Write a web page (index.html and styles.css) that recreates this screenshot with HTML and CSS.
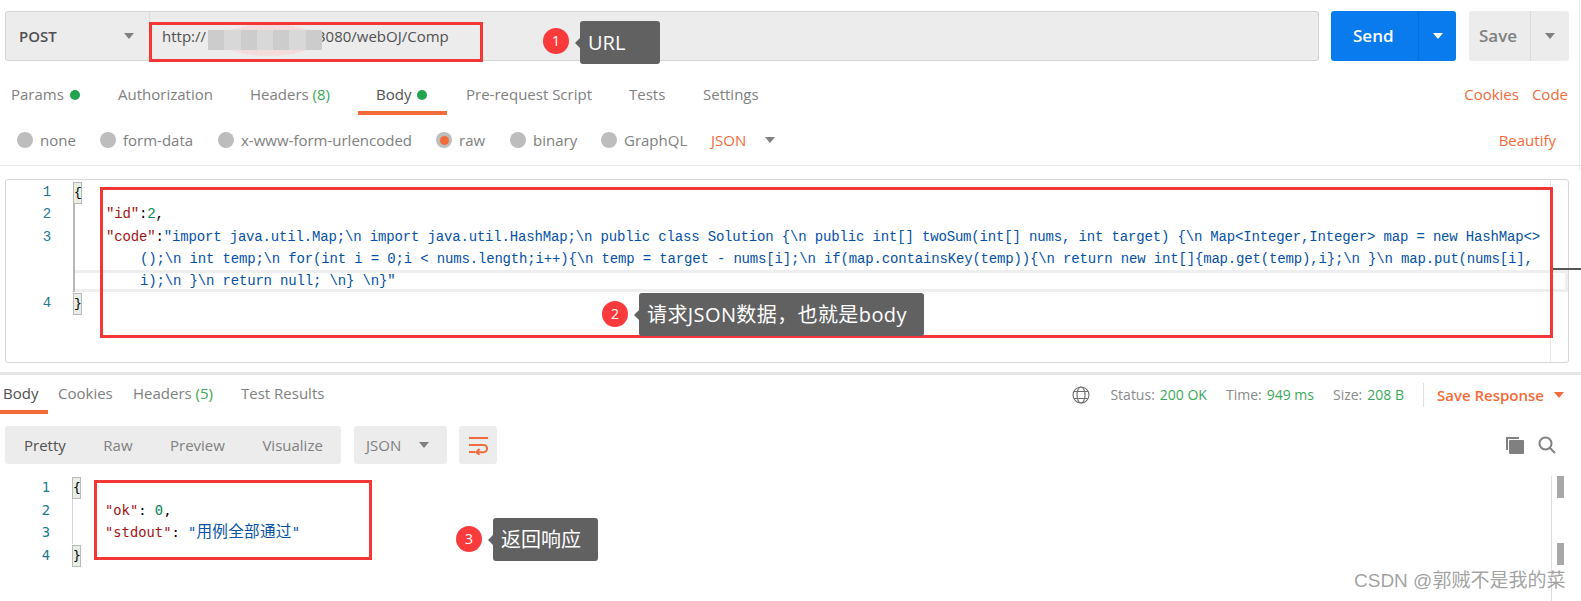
FILE: index.html
```html
<!DOCTYPE html>
<html lang="zh">
<head>
<meta charset="utf-8">
<title>Postman</title>
<link rel="stylesheet" href="styles.css">
</head>
<body>
<div class="app">
  <div class="url-row">
    <div class="url-bar">
      <div class="method"><span>POST</span><i class="caret"></i></div>
      <div class="url">http://<span class="url-gap"></span>3080/webOJ/Comp</div>
    </div>
    <div class="send"><span class="send-label">Send</span><span class="send-more"><i class="caret caret-white"></i></span></div>
    <div class="save"><span class="save-label">Save</span><span class="save-more"><i class="caret"></i></span></div>
  </div>

  <div class="tabs req-tabs">
    <span class="tab t-params">Params<i class="dot"></i></span>
    <span class="tab t-auth">Authorization</span>
    <span class="tab t-headers">Headers <em>(8)</em></span>
    <span class="tab t-body active">Body<i class="dot"></i></span>
    <span class="tab t-pre">Pre-request Script</span>
    <span class="tab t-tests">Tests</span>
    <span class="tab t-settings">Settings</span>
    <span class="tab-right"><span class="link">Cookies</span><span class="link">Code</span></span>
  </div>

  <div class="radios">
    <span class="radio r-none"><i></i>none</span>
    <span class="radio r-form"><i></i>form-data</span>
    <span class="radio r-url"><i></i>x-www-form-urlencoded</span>
    <span class="radio r-raw on"><i></i>raw</span>
    <span class="radio r-bin"><i></i>binary</span>
    <span class="radio r-gql"><i></i>GraphQL</span>
    <span class="link r-json">JSON</span><i class="caret r-caret"></i>
    <span class="link beautify">Beautify</span>
  </div>

  <div class="editor">
    <div class="row"><span class="ln">1</span><span class="code first"><b class="fold">{</b></span></div>
    <div class="row"><span class="ln">2</span><span class="code ind"><span class="key">"id"</span>:<span class="num">2</span>,</span></div>
    <div class="row"><span class="ln">3</span><span class="code ind"><span class="key">"code"</span>:<span class="str">"import java.util.Map;\n import java.util.HashMap;\n public class Solution {\n public int[] twoSum(int[] nums, int target) {\n Map&lt;Integer,Integer&gt; map = new HashMap&lt;&gt;</span></span></div>
    <div class="row"><span class="ln"></span><span class="code wrap str">();\n int temp;\n for(int i = 0;i &lt; nums.length;i++){\n temp = target - nums[i];\n if(map.containsKey(temp)){\n return new int[]{map.get(temp),i};\n }\n map.put(nums[i],</span></div>
    <div class="row"><span class="ln"></span><span class="code wrap str current">i);\n }\n return null; \n} \n}"</span></div>
    <div class="row"><span class="ln">4</span><span class="code last"><b class="fold">}</b></span></div>
    <i class="ruler"></i>
    <i class="cursor-mark"></i>
  </div>

  <div class="section-line"></div>

  <div class="tabs res-tabs">
    <span class="tab t-rbody active">Body</span>
    <span class="tab t-rcookies">Cookies</span>
    <span class="tab t-rheaders">Headers <em>(5)</em></span>
    <span class="tab t-rtests">Test Results</span>
    <span class="status">
      <svg class="globe" viewBox="0 0 18 18" fill="none" stroke="#6d6d6d" stroke-width="1.1"><circle cx="9" cy="9" r="8"/><ellipse cx="9" cy="9" rx="4" ry="8"/><path d="M2 5.5h14M2 12.5h14"/></svg>
      <span class="st">Status:</span><span class="ok">200 OK</span>
      <span class="st st2">Time:</span><span class="ok">949 ms</span>
      <span class="st st2">Size:</span><span class="ok">208 B</span>
      <span class="save-resp"><span>Save Response</span><i class="caret caret-orange"></i></span>
    </span>
  </div>

  <div class="toolbar">
    <div class="views">
      <span class="view selected">Pretty</span>
      <span class="view">Raw</span>
      <span class="view">Preview</span>
      <span class="view">Visualize</span>
    </div>
    <div class="format"><span>JSON</span><i class="caret"></i></div>
    <div class="wrap-btn">
      <svg viewBox="0 0 24 20" fill="none" stroke="#f26b3a" stroke-width="2"><path d="M3 3h19"/><path d="M3 10h14.5a3.6 3.6 0 0 1 0 7.2H11"/><path d="M13.5 14l-3.2 3.2 3.2 2.6"/><path d="M3 17h6"/></svg>
    </div>
    <div class="tool-icons">
      <svg class="copy" viewBox="0 0 19 18"><path d="M2 14V2h12" fill="none" stroke="#808080" stroke-width="2"/><rect x="4" y="4" width="15" height="14" rx="1" fill="#808080"/></svg>
      <svg class="search" viewBox="0 0 18 18" fill="none" stroke="#808080" stroke-width="2"><circle cx="7.5" cy="7.5" r="6"/><path d="M12 12l5 5"/></svg>
    </div>
  </div>

  <div class="response">
    <div class="rrow"><span class="ln">1</span><span class="rcode first"><b class="fold">{</b></span></div>
    <div class="rrow"><span class="ln">2</span><span class="rcode ind"><span class="key">"ok"</span>: <span class="num">0</span>,</span></div>
    <div class="rrow"><span class="ln">3</span><span class="rcode ind"><span class="key">"stdout"</span>: <span class="str">"<span class="cjk">用例全部通过</span>"</span></span></div>
    <div class="rrow"><span class="ln">4</span><span class="rcode last"><b class="fold">}</b></span></div>
    <i class="rruler"></i><i class="mark mark-a"></i><i class="mark mark-b"></i>
  </div>

  <div class="blur">
    <i class="smear"></i>
    <i class="b1"></i><i class="b2"></i><i class="b1"></i><i class="b2"></i><i class="b1"></i><i class="b2"></i><i class="b1"></i>
  </div>

  <i class="box box-url"></i>
  <i class="box box-body"></i>
  <i class="box box-res"></i>

  <span class="badge badge-1">1</span>
  <span class="tip tip-1">URL</span>
  <span class="badge badge-2">2</span>
  <span class="tip tip-2">请求JSON数据，也就是body</span>
  <span class="badge badge-3">3</span>
  <span class="tip tip-3">返回响应</span>

  <span class="watermark">CSDN @郭贼不是我的菜</span>
  <i class="edge"></i>
</div>
</body>
</html>
```
FILE: styles.css
```css
* { box-sizing: border-box; }
html, body { margin: 0; padding: 0; background: #fff; }
i, em, b { font-style: normal; font-weight: normal; }

.app {
  position: relative;
  width: 1581px;
  height: 601px;
  padding-top: 11px;
  overflow: hidden;
  font-family: "Open Sans", "Noto Sans CJK SC", sans-serif;
  font-size: 15px;
  color: #808080;
}

.caret {
  display: inline-block;
  width: 0;
  height: 0;
  border-left: 5px solid transparent;
  border-right: 5px solid transparent;
  border-top: 6px solid #808080;
}
.caret-white { border-top-color: #fff; }
.caret-orange { border-top-color: #f26b3a; }

/* URL row */
.url-row { display: flex; height: 50px; padding: 0 12px 0 5px; }
.url-bar { flex: 1; display: flex; background: #ececec; border: 1px solid #d4d4d4; border-radius: 3px; }
.method { width: 144px; padding: 0 13px; display: flex; align-items: center; justify-content: space-between; border-right: 1px solid #dcdcdc; color: #505050; font-weight: 600; }
.method .caret { margin-right: 2px; }
.url { padding: 0 0 0 12px; line-height: 49px; color: #505050; display: flex; }
.url-gap { width: 111px; }
.send { width: 125px; margin-left: 12px; display: flex; background: #097bed; border-radius: 3px; color: #fff; font-weight: 600; font-size: 17px; }
.send-label { width: 88px; padding-left: 22px; line-height: 50px; border-right: 1px solid #0a6fd4; }
.send-more { flex: 1; display: flex; align-items: center; justify-content: center; }
.save { width: 100px; margin-left: 13px; display: flex; background: #ececec; border-radius: 3px; color: #808080; font-weight: 600; font-size: 17px; }
.save-label { width: 62px; padding-left: 10px; line-height: 50px; border-right: 1px solid #dadada; }
.save-more { flex: 1; display: flex; align-items: center; justify-content: center; }

/* Tabs */
.tabs { display: flex; }
.req-tabs { height: 38px; margin-top: 16px; }
.tab { display: block; height: 38px; line-height: 34px; white-space: nowrap; color: #808080; }
.tab em { color: #3aa757; }
.dot { display: inline-block; width: 10px; height: 10px; border-radius: 50%; background: #21a34f; margin-left: 6px; }
.t-params { margin-left: 11px; width: 107px; }
.t-auth { width: 132px; }
.t-headers { width: 108px; }
.t-body { width: 89px; padding-left: 18px; }
.t-body.active { border-bottom: 4px solid #f26b3a; color: #505050; }
.t-pre { margin-left: 19px; width: 163px; }
.t-tests { width: 74px; }
.t-settings { width: 80px; }
.tab-right { margin-left: auto; margin-right: 13px; line-height: 34px; display: flex; gap: 13px; }
.link { color: #f26b3a; }

/* Body type radios */
.radios { height: 51px; display: flex; align-items: center; border-bottom: 1px solid #e6e6e6; padding-left: 17px; white-space: nowrap; }
.radio { display: flex; align-items: center; gap: 7px; color: #808080; }
.radio i { width: 16px; height: 16px; border-radius: 50%; background: #bdbdbd; display: flex; align-items: center; justify-content: center; }
.radio.on i::after { content: ""; width: 9px; height: 9px; border-radius: 50%; background: #f26b3a; }
.r-none { width: 83px; }
.r-form { width: 118px; }
.r-url { width: 218px; }
.r-raw { width: 74px; }
.r-bin { width: 91px; }
.r-gql { width: 110px; }
.r-json { width: 54px; }
.beautify { margin-left: auto; margin-right: 25px; }

/* Editor */
.editor { position: relative; height: 184px; margin: 13px 12px 0 5px; border: 1px solid #d8d8d8; border-radius: 3px; padding-top: 1px; font-family: "Liberation Mono", "Noto Sans CJK SC", monospace; font-size: 14px; letter-spacing: -.16px; color: #000; }
.row { display: flex; height: 22.3px; line-height: 22.3px; white-space: nowrap; }
.ln { width: 67px; flex: none; padding-right: 22px; text-align: right; color: #237893; }
.code { flex: 1; min-width: 0; border-left: 2px solid #b8b8b8; }
.code.ind { padding-left: 31px; }
.code.wrap { padding-left: 65px; }
.code.current { box-shadow: inset 0 3px 0 #eee, inset 0 -3px 0 #eee, inset -3px 0 0 #eee; line-height: 23px; }
.code.first, .code.last { border-left-color: transparent; }
.fold { display: inline-block; width: 9px; height: 22px; margin-left: -2px; text-align: center; background: #e7eee4; border: 1px solid #b9b9b9; line-height: 20px; font-size: 13px; letter-spacing: 0; }
.key { color: #a31515; }
.num { color: #098658; }
.str { color: #0451a5; }
.ruler { position: absolute; left: 1544px; top: 0; bottom: 0; width: 1px; background: #e6e6e6; }
.cursor-mark { position: absolute; left: 1547px; top: 88px; width: 28px; height: 2px; background: #555; }

/* Response header */
.section-line { height: 3px; margin-top: 9px; background: #e6e6e6; }
.res-tabs { height: 39px; }
.res-tabs .tab { height: 39px; line-height: 36px; }
.t-rbody { width: 48px; padding-left: 3px; }
.t-rbody.active { border-bottom: 4px solid #f26b3a; color: #505050; }
.t-rcookies { margin-left: 10px; width: 75px; }
.t-rheaders { width: 108px; }
.t-rtests { width: 90px; }
.status { margin-left: auto; padding-right: 17px; display: flex; align-items: center; gap: 5px; font-size: 14px; }
.globe { width: 18px; height: 18px; margin-right: 15px; }
.st { color: #8a8a8a; }
.st2 { margin-left: 14px; }
.ok { color: #3aa757; }
.save-resp { margin-left: 14px; padding-left: 13px; height: 24px; border-left: 1px solid #e0e0e0; display: flex; align-items: center; gap: 10px; color: #f26b3a; font-weight: 600; font-size: 15px; }

/* Response toolbar */
.toolbar { display: flex; height: 38px; margin-top: 12px; padding: 0 12px 0 5px; }
.views { width: 336px; display: flex; background: #ececec; border-radius: 3px; padding-left: 19px; line-height: 38px; }
.view { color: #808080; margin-right: 37.5px; }
.view:last-child { margin-right: 0; }
.view.selected { color: #505050; }
.format { width: 93px; margin-left: 13px; background: #ececec; border-radius: 3px; padding: 0 12px; display: flex; align-items: center; justify-content: space-between; }
.format .caret { margin-right: 6px; }
.wrap-btn { width: 38px; margin-left: 12px; background: #ececec; border-radius: 3px; display: flex; align-items: center; justify-content: center; }
.wrap-btn svg { width: 24px; height: 20px; }
.tool-icons { margin-left: auto; margin-right: 13px; display: flex; align-items: center; gap: 14px; }
.copy { width: 19px; height: 18px; }
.search { width: 18px; height: 18px; }

/* Response body */
.response { position: relative; height: 120px; margin-top: 12px; padding-left: 5px; font-family: "DejaVu Sans Mono", "Noto Sans CJK SC", monospace; font-size: 13.8px; color: #000; }
.rrow { display: flex; height: 22.5px; line-height: 22.5px; white-space: nowrap; }
.rcode { border-left: 1px solid #d4d4d4; flex: 1; }
.rcode.ind { padding-left: 32px; }
.rcode.first, .rcode.last { border-left-color: transparent; }
.rrow .fold { margin-left: -1px; }
.cjk { font-size: 15.6px; letter-spacing: .3px; }
.rruler { position: absolute; left: 1551px; top: 0; height: 130px; width: 1px; background: #ddd; }
.mark { position: absolute; left: 1557px; width: 7px; height: 22px; background: #a8a8a8; }
.mark-a { top: 0; }
.mark-b { top: 67px; }

/* Overlays added on the screenshot */
.blur { position: absolute; left: 208px; top: 30px; display: flex; height: 20px; width: 114px; border-radius: 8px; }
.blur i { flex: 1; position: relative; }
.blur .b1 { background: #cccccc; }
.blur .b2 { background: #d8d8d8; }
.blur .smear { position: absolute; left: 12px; top: -6px; width: 98px; height: 32px; border-radius: 50%; background: #f3dcdc; }

.box { position: absolute; border: 3px solid #f33636; }
.box-url { left: 149px; top: 22px; width: 334px; height: 40px; }
.box-body { left: 100px; top: 187px; width: 1453px; height: 151px; }
.box-res { left: 94px; top: 480px; width: 278px; height: 80px; }

.badge { position: absolute; width: 26px; height: 26px; border-radius: 50%; background: #fb3a3c; color: #fff; text-align: center; line-height: 26px; font-size: 14px; }
.badge-1 { left: 543px; top: 28px; }
.badge-2 { left: 602px; top: 301px; }
.badge-3 { left: 456px; top: 526px; }

.tip { position: absolute; height: 43px; background: #616161; border-radius: 3px; color: #fff; font-size: 20px; line-height: 44px; padding: 0 8px; white-space: nowrap; }
.tip::before { content: ""; position: absolute; left: -5px; top: 17px; border-top: 5px solid transparent; border-bottom: 5px solid transparent; border-right: 5px solid #616161; }
.tip-1 { left: 580px; top: 21px; width: 80px; }
.tip-2 { left: 639px; top: 293px; width: 285px; letter-spacing: .4px; }
.tip-3 { left: 493px; top: 518px; width: 105px; }

.watermark { position: absolute; left: 1354px; top: 568px; font-family: "Liberation Sans", "Noto Sans CJK SC", sans-serif; font-size: 19px; line-height: 26px; color: rgba(120,120,120,.7); white-space: nowrap; }
.edge { position: absolute; right: 1px; top: 0; width: 1px; height: 170px; background: #e8e8e8; }
```
